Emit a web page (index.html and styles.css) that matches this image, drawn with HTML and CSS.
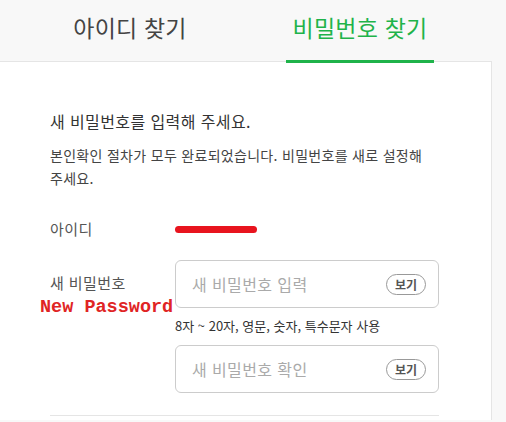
FILE: index.html
```html
<!DOCTYPE html>
<html lang="ko">
  <head>
    <meta charset="utf-8">
    <title>비밀번호 찾기</title>
    <link rel="stylesheet" href="styles.css">
  </head>
  <body>
    <div class="tabs">
      <div class="tab"><span>아이디 찾기</span></div>
      <div class="tab on"><span>비밀번호 찾기</span></div>
    </div>
    <div class="panel">
      <h3 class="title">새 비밀번호를 입력해 주세요.</h3>
      <p class="desc">본인확인 절차가 모두 완료되었습니다. 비밀번호를 새로 설정해 주세요.</p>
      <div class="row">
        <div class="label">아이디</div>
        <div class="field"><span class="masked"></span></div>
      </div>
      <div class="row pw">
        <div class="label">새 비밀번호</div>
        <div class="field">
          <div class="box">
            <input type="password" placeholder="새 비밀번호 입력">
            <button type="button">보기</button>
          </div>
          <p class="hint">8자 ~ 20자, 영문, 숫자, 특수문자 사용</p>
          <div class="box">
            <input type="password" placeholder="새 비밀번호 확인">
            <button type="button">보기</button>
          </div>
        </div>
        <span class="note">New Password</span>
      </div>
      <div class="line"></div>
    </div>
  </body>
</html>
```
FILE: styles.css
```css
html, body {
    margin: 0;
    background: #f8f8f8;
    font-family: 'Noto Sans CJK KR', 'Noto Sans', sans-serif;
    color: #333;
}

.tabs {
    display: flex;
    height: 63px;
    padding-left: 15px;
    position: relative;
    z-index: 1;
}
.tab {
    width: 230px;
    display: flex;
    justify-content: center;
}
.tab span {
    display: block;
    padding: 0 7px;
    height: 60px;
    line-height: 54px;
    font-size: 23px;
    color: #444;
    letter-spacing: 0.2px;
}
.tab.on span {
    color: #1fb34a;
    border-bottom: 3px solid #1fb34a;
}

.panel {
    width: 492px;
    min-height: 359px;
    background: #fff;
    border-top: 1px solid #e5e5e5;
    border-right: 1px solid #e5e5e5;
    margin-top: -2px;
    padding: 48px 0 0 50px;
    box-sizing: border-box;
}
.title {
    margin: 0;
    font-size: 16px;
    font-weight: normal;
    line-height: 22px;
    letter-spacing: 0.4px;
    color: #333;
}
.desc {
    margin: 12px 0 0;
    width: 395px;
    font-size: 14px;
    line-height: 23px;
    letter-spacing: 0.3px;
    word-break: keep-all;
    color: #444;
}

.row {
    display: flex;
    position: relative;
}
.row:nth-of-type(1) {
    margin-top: 28px;
}
.label {
    width: 125px;
    font-size: 15px;
    line-height: 22px;
    letter-spacing: 0.4px;
    color: #555;
}
.field {
    width: 264px;
}
.masked {
    display: block;
    width: 82px;
    height: 7px;
    margin-top: 8px;
    background: #e8141e;
    border-radius: 4px;
}

.pw {
    margin-top: 20px;
}
.pw .label {
    padding-top: 12px;
}
.box {
    display: flex;
    align-items: center;
    height: 48px;
    border: 1px solid #ccc;
    border-radius: 6px;
    padding: 0 12px 0 14px;
    box-sizing: border-box;
}
.box input {
    flex: 1;
    min-width: 0;
    border: 0;
    outline: 0;
    font-family: inherit;
    font-size: 16px;
    letter-spacing: 0.4px;
    color: #333;
}
.box input::placeholder {
    color: #aaa;
}
.box button {
    height: 21px;
    padding: 0 8px;
    border: 1px solid #999;
    border-radius: 11px;
    background: #fff;
    font-family: inherit;
    font-size: 12px;
    font-weight: bold;
    color: #555;
    line-height: 19px;
}
.hint {
    margin: 9px 0 11px;
    font-size: 13px;
    line-height: 17px;
    color: #333;
}
.note {
    position: absolute;
    left: -10px;
    top: 37px;
    font-family: 'Liberation Mono', monospace;
    font-weight: bold;
    font-size: 18.5px;
    color: #e02424;
}
.line {
    width: 389px;
    margin-top: 22px;
    border-top: 1px solid #e5e5e5;
}
```
